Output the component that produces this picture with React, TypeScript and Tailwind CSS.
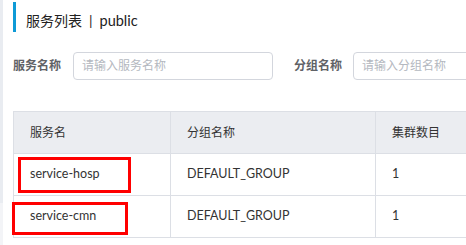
import React from "react";

const font = { fontFamily: 'Lato, "Noto Sans CJK SC", sans-serif' };

export default function App() {
  return (
    <div
      className="relative flex w-[466px] h-[245px] overflow-hidden bg-white text-[#333]"
      style={font}
    >
      <div className="flex w-[3px] shrink-0 flex-col">
        <div className="h-[203px] bg-[#e9ecf1]" />
        <div className="flex-1 bg-[#f3f4f7]" />
      </div>
      <div className="min-w-0 flex-1 pl-[10px]">
        <div className="mt-[2px] flex h-[30px] items-center border-l-[3px] border-[#0e9ad6] pl-[10px] pt-[7px] text-[14px] text-[#222]">
          <span>服务列表</span>
          <span className="mx-[7px]">|</span>
          <span className="text-[14.5px]">public</span>
        </div>

        <div className="mt-[20px] flex h-[28px] items-center text-[12px]">
          <span className="w-[49px] shrink-0 font-bold text-[#606266]">服务名称</span>
          <div className="ml-[11px] flex h-[28px] w-[200px] shrink-0 items-center rounded-[4px] border border-[#d3d6dd] pl-[8px] text-[#b4b8c0]">
            请输入服务名称
          </div>
          <span className="ml-[21px] w-[49px] shrink-0 font-bold text-[#606266]">分组名称</span>
          <div className="ml-[10px] flex h-[28px] w-[200px] shrink-0 items-center rounded-[4px] border border-[#d3d6dd] pl-[8px] text-[#b4b8c0]">
            请输入分组名称
          </div>
        </div>

        <table className="mt-[31px] w-[520px] table-fixed border-collapse text-[12.5px] text-[#333]">
          <colgroup>
            <col className="w-[157px]" />
            <col className="w-[205px]" />
            <col />
          </colgroup>
          <thead>
            <tr className="h-[42px] bg-[#ebedf1] text-[12px]">
              <th className="border border-[#dcdfe5] pl-[16px] text-left font-normal">服务名</th>
              <th className="border border-[#dcdfe5] pl-[16px] text-left font-normal">分组名称</th>
              <th className="border border-[#dcdfe5] pl-[16px] text-left font-normal">集群数目</th>
            </tr>
          </thead>
          <tbody>
            {["service-hosp", "service-cmn"].map((name) => (
              <tr key={name} className="h-[42px]">
                <td className="border border-[#dcdfe5] pl-[16px]">{name}</td>
                <td className="border border-[#dcdfe5] pl-[16px]">DEFAULT_GROUP</td>
                <td className="border border-[#dcdfe5] pl-[16px]">1</td>
              </tr>
            ))}
          </tbody>
        </table>
      </div>

      <div className="absolute left-[18px] top-[157px] h-[36px] w-[113px] border-[3px] border-[#ff0000]" />
      <div className="absolute left-[12px] top-[202px] h-[33px] w-[116px] border-[3px] border-[#ff0000]" />
    </div>
  );
}
